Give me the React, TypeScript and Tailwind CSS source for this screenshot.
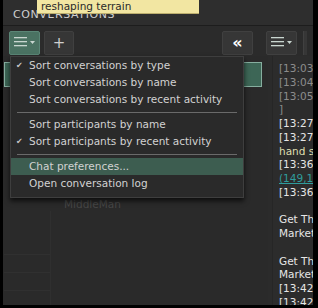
const menuItems: ({ label: string; checked?: boolean; active?: boolean } | 'sep')[] = [
  { label: 'Sort conversations by type', checked: true },
  { label: 'Sort conversations by name' },
  { label: 'Sort conversations by recent activity' },
  'sep',
  { label: 'Sort participants by name' },
  { label: 'Sort participants by recent activity', checked: true },
  'sep',
  { label: 'Chat preferences...', active: true },
  { label: 'Open conversation log' },
]

const chatLines: { text: string; color: string; link?: boolean }[] = [
  { text: '[13:03]', color: 'text-[#8c8c8c]' },
  { text: '[13:04]', color: 'text-[#8c8c8c]' },
  { text: '[13:05]', color: 'text-[#8c8c8c]' },
  { text: ']', color: 'text-[#8c8c8c]' },
  { text: '[13:27]', color: 'text-[#e6e6e6]' },
  { text: '[13:27]', color: 'text-[#e6e6e6]' },
  { text: 'hand shake', color: 'text-[#dedeb0]' },
  { text: '[13:36]', color: 'text-[#e6e6e6]' },
  { text: '(149,1', color: 'text-[#2f9c9c]', link: true },
  { text: '[13:36]', color: 'text-[#e6e6e6]' },
  { text: '\u00a0', color: '' },
  { text: 'Get The', color: 'text-[#e6e6e6]' },
  { text: 'Market', color: 'text-[#e6e6e6]' },
  { text: '\u00a0', color: '' },
  { text: 'Get The', color: 'text-[#e6e6e6]' },
  { text: 'Market', color: 'text-[#e6e6e6]' },
  { text: '[13:42]', color: 'text-[#e6e6e6]' },
  { text: '[13:42]', color: 'text-[#e6e6e6]' },
]

function MenuIcon() {
  return (
    <svg width="22" height="12" viewBox="0 0 22 12">
      <rect x="0" y="0" width="13" height="1.3" fill="#c9d6d0" />
      <rect x="0" y="4" width="13" height="1.3" fill="#c9d6d0" />
      <rect x="0" y="8" width="13" height="1.3" fill="#c9d6d0" />
      <path d="M16 4 L21 4 L18.5 7 Z" fill="#c9d6d0" />
    </svg>
  )
}

function App() {
  return (
    <div className="relative w-[318px] h-[308px] overflow-hidden bg-black font-['DejaVu_Sans',sans-serif] text-[10.5px]">
      <div className="ml-[3px] w-[310px] h-[305px] flex flex-col bg-[#2b2b2b]">
        {/* title bar */}
        <div className="h-[26px] shrink-0 flex items-center pt-[5px] pl-[10px] bg-[#2e2e2e] border-b border-[#1d1d1d]">
          <span className="text-[11px] tracking-[0.6px] text-[#cfcfcf]">CONVERSATIONS</span>
        </div>

        {/* toolbar */}
        <div className="h-[30px] shrink-0 flex items-center pt-[4px] pl-[6px] pr-[6px]">
          <div className="w-[31px] h-[24px] flex items-center justify-center bg-[#4a7262] border border-[#5a8676] rounded-[2px]">
            <MenuIcon />
          </div>
          <div className="ml-[4px] w-[30px] h-[24px] flex items-center justify-center bg-[#363636] border border-[#404040] rounded-[2px] text-[#cfcfcf] text-[15px] leading-none">
            +
          </div>
          <div className="ml-auto w-[31px] h-[24px] flex items-center justify-center bg-[#363636] border border-[#404040] rounded-[2px] text-white font-bold text-[16px] leading-none">
            «
          </div>
          <div className="ml-[13px] w-[31px] h-[24px] flex items-center justify-center bg-[#363636] border border-[#404040] rounded-[2px]">
            <MenuIcon />
          </div>
          <div className="ml-[6px] w-[4px] h-[24px] bg-[#363636] border-l border-[#404040]" />
        </div>

        {/* body */}
        <div className="flex-1 flex min-h-0">
          {/* conversation list */}
          <div className="w-[265px] flex flex-col pt-[6px] pl-[1px] bg-[#2a2a2a]">
            <div className="w-[258px] h-[25px] shrink-0 bg-[#3d6656] border border-[#86ae9f]" />
            <div className="h-[110px] shrink-0" />
            <div className="h-[14px] pl-[60px] text-[#474747] leading-[14px]">MiddleMan</div>
            <div className="flex-1 flex">
              <div className="w-[47px] flex flex-col justify-end pb-[14px] gap-[17px] border-r border-[#2f2f2f]">
                <div className="h-px bg-[#303030]" />
                <div className="h-px bg-[#303030]" />
                <div className="h-px bg-[#303030]" />
              </div>
            </div>
          </div>

          {/* chat */}
          <div className="ml-[4px] flex-1 overflow-hidden bg-[#2c2c2c] border-l border-[#262626] pt-[5px]">
            <div className="mt-[1px] pl-[6px] leading-[13.75px] whitespace-nowrap">
              {chatLines.map((l, i) => (
                <div key={i} className={l.color + (l.link ? ' underline' : '')}>
                  {l.text}
                </div>
              ))}
            </div>
          </div>
        </div>
      </div>

      {/* tooltip */}
      <div className="absolute left-[37px] top-0 w-[162px] h-[14px] bg-[#f2e6a2] border-b border-[#bcae6e] pl-[4px] text-[#2a2a2a] leading-[13px]">
        reshaping terrain
      </div>

      {/* dropdown menu */}
      <div className="absolute left-[10px] top-[56px] w-[234px] h-[142px] bg-[#2a2a2a] border border-[#3e3e3e] shadow-[0_3px_5px_rgba(0,0,0,0.7)]">
        {menuItems.map((it, i) =>
          it === 'sep' ? (
            <div key={i} className="h-[8px] flex items-center px-[6px]">
              <div className="h-px w-full bg-[#6a6a6a]" />
            </div>
          ) : (
            <div
              key={i}
              className={
                'h-[17px] flex items-center text-[#d2d2d2] ' + (it.active ? 'bg-[#3d5d50]' : '')
              }
            >
              <span className="w-[18px] pl-[5px] text-[8px] text-[#c8c8c8]">{it.checked ? '✔' : ''}</span>
              <span>{it.label}</span>
            </div>
          )
        )}
      </div>
    </div>
  )
}

export default App
